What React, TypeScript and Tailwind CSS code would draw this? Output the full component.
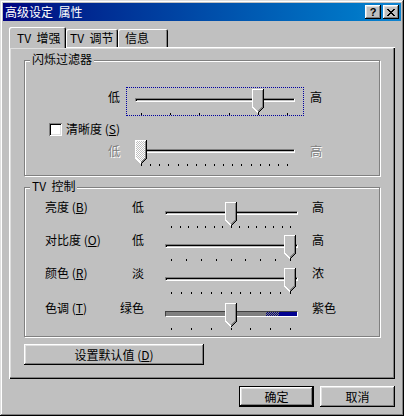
import React from "react";

const raised =
  "shadow-[inset_-1px_-1px_#000,inset_1px_1px_#fff,inset_-2px_-2px_#808080,inset_2px_2px_#dfdfdf]";

const embossed = "text-[#808080] [text-shadow:1px_1px_0_#fff]";

function Key({ k }: { k: string }) {
  return (
    <>
      {" ("}
      <span className="underline underline-offset-1">{k}</span>
      {")"}
    </>
  );
}

function Thumb({ disabled }: { disabled?: boolean }) {
  return (
    <svg className="block" width="12" height="24" viewBox="0 0 12 24" shapeRendering="crispEdges">
      {disabled && (
        <defs>
          <pattern id="dither" width="2" height="2" patternUnits="userSpaceOnUse">
            <rect width="2" height="2" fill="#c0c0c0" />
            <rect width="1" height="1" fill="#fff" />
            <rect x="1" y="1" width="1" height="1" fill="#fff" />
          </pattern>
        </defs>
      )}
      <polygon points="0,0 12,0 12,18 6,24 0,18" fill={disabled ? "url(#dither)" : "#c0c0c0"} />
      <path d="M0.5 18V0.5H11" stroke="#fff" fill="none" />
      <path d="M0.5 18L6 23.5" stroke="#fff" fill="none" />
      <path d="M11.5 0V18L6 23.5" stroke="#000" fill="none" />
      <path d="M10.5 1V18L6 22.5" stroke="#808080" fill="none" />
    </svg>
  );
}

type SliderProps = {
  len: number;
  count: number;
  value: number;
  focused?: boolean;
  disabled?: boolean;
  hue?: boolean;
};

function Slider({ len, count, value, focused, disabled, hue }: SliderProps) {
  const step = (len - 14) / (count - 1);
  const ticks = Array.from({ length: count }, (_, i) => Math.round(6 + i * step));
  const thumbLeft = 9 + Math.round(value * step);
  return (
    <div
      className={`relative flex h-[29px] shrink-0 flex-col px-[9px] ${hue ? "pt-[10px]" : "pt-[11px]"}`}
      style={{ width: len + 18 }}
    >
      {focused && <div className="absolute inset-0 border border-dotted border-[#0000a0]" />}
      {hue ? (
        <div className="flex h-[7px] border border-t-[#404040] border-l-[#404040] border-b-white border-r-white">
          <div className="flex-1 bg-[#808080]" />
          <div className="w-[13px] bg-[repeating-conic-gradient(#000080_0_25%,#808080_0_50%)] bg-[length:2px_2px]" />
          <div className="w-[18px] bg-[#000090]" />
        </div>
      ) : (
        <div className="h-[4px] border border-t-[#808080] border-l-[#808080] border-b-white border-r-white shadow-[inset_1px_1px_#000]" />
      )}
      <div className="relative mt-[11px] h-[2px]">
        {ticks.map((x) => (
          <span key={x} className="absolute top-0 h-[2px] w-px bg-black" style={{ left: x }} />
        ))}
      </div>
      <div className="absolute top-[2px]" style={{ left: thumbLeft }}>
        <Thumb disabled={disabled} />
      </div>
    </div>
  );
}

function Group({ title, className, children }: { title: React.ReactNode; className: string; children: React.ReactNode }) {
  return (
    <div className={`relative flex w-[356px] flex-col border border-[#808080] shadow-[inset_1px_1px_#fff,1px_1px_#fff] ${className}`}>
      <span className="absolute -top-[9px] left-[5px] bg-[#c0c0c0] px-[2px]">{title}</span>
      {children}
    </div>
  );
}

const controls = [
  { label: "亮度", key: "B", lo: "低", hi: "高", count: 15, value: 7 },
  { label: "对比度", key: "O", lo: "低", hi: "高", count: 9, value: 8 },
  { label: "颜色", key: "R", lo: "淡", hi: "浓", count: 13, value: 12 },
  { label: "色调", key: "T", lo: "绿色", hi: "紫色", count: 7, value: 3 },
];

export default function App() {
  return (
    <div className="flex h-[416px] w-[404px] flex-col bg-[#c0c0c0] p-[3px] font-['Noto_Sans_CJK_SC',sans-serif] text-[12px] leading-[14px] text-black shadow-[inset_-1px_-1px_#000,inset_1px_1px_#dfdfdf,inset_-2px_-2px_#808080,inset_2px_2px_#fff]">
      {/* title bar */}
      <div className="flex h-[18px] items-center bg-linear-to-r from-[#000080] to-[#1084d0] pl-[2px] pr-[2px] text-white">
        <span className="flex-1">高级设定&nbsp; 属性</span>
        <div className={`flex h-[14px] w-[16px] items-center justify-center bg-[#c0c0c0] font-['Liberation_Sans',sans-serif] text-[11px] font-bold text-black ${raised}`}>
          ?
        </div>
        <div className={`ml-[2px] flex h-[14px] w-[16px] items-center justify-center bg-[#c0c0c0] ${raised}`}>
          <svg className="block" width="8" height="7" viewBox="0 0 8 7" shapeRendering="crispEdges">
            <path
              d="M0 0h2v1H0zM6 0h2v1H6zM1 1h2v1H1zM5 1h2v1H5zM2 2h4v1H2zM3 3h2v1H3zM2 4h4v1H2zM1 5h2v1H1zM5 5h2v1H5zM0 6h2v1H0zM6 6h2v1H6z"
              fill="#000"
            />
          </svg>
        </div>
      </div>

      <div className="mt-[6px] flex flex-col px-[6px]">
        {/* tabs */}
        <div className="flex h-[20px] items-end">
          <div className="relative z-10 -mb-px h-[21px] w-[57px] rounded-t-[2px] bg-[#c0c0c0] pl-[8px] pt-[4px] shadow-[inset_1px_1px_#fff,inset_-1px_0_#000,inset_-2px_0_#808080]">
            TV&nbsp; 增强
          </div>
          <div className="h-[18px] w-[52px] rounded-t-[2px] pl-[4px] pt-[2px] shadow-[inset_1px_1px_#fff,inset_-1px_0_#000,inset_-2px_0_#808080]">
            TV&nbsp; 调节
          </div>
          <div className="h-[18px] w-[50px] rounded-t-[2px] pl-[7px] pt-[2px] shadow-[inset_1px_1px_#fff,inset_-1px_0_#000,inset_-2px_0_#808080]">
            信息
          </div>
        </div>

        {/* panel */}
        <div className="flex h-[332px] flex-col pl-[15px] pt-[13px] shadow-[inset_1px_1px_#fff,inset_-1px_-1px_#000,inset_-2px_-2px_#808080,inset_2px_2px_#dfdfdf]">
          <Group title="闪烁过滤器" className="h-[116px]">
            <div className="mt-[26px] flex items-start pl-[83px]">
              <span className="mt-[3px] w-[12px]">低</span>
              <div className="ml-[6px]">
                <Slider len={160} count={6} value={4} focused />
              </div>
              <span className="ml-[6px] mt-[3px]">高</span>
            </div>
            <div className="mt-[6px] flex items-center pl-[24px]">
              <div className="h-[13px] w-[13px] bg-white shadow-[inset_1px_1px_#808080,inset_-1px_-1px_#fff,inset_2px_2px_#000,inset_-2px_-2px_#dfdfdf]" />
              <span className="ml-[4px]">
                清晰度
                <Key k="S" />
              </span>
            </div>
            <div className="mt-[2px] flex items-start pl-[83px]">
              <span className={`mt-[6px] w-[12px] ${embossed}`}>低</span>
              <div className="ml-[6px]">
                <Slider len={160} count={17} value={0} disabled />
              </div>
              <span className={`ml-[6px] mt-[6px] ${embossed}`}>高</span>
            </div>
          </Group>

          <Group title="TV&nbsp; 控制" className="mt-[11px] h-[150px] pt-[12px]">
            {controls.map((c, i) => (
              <div key={c.key} className={`flex h-[29px] items-start pl-[20px] ${i === 0 ? "" : i === 3 ? "mt-[6px]" : "mt-[4px]"}`}>
                <span className="w-[74px] whitespace-nowrap">
                  {c.label}
                  <Key k={c.key} />
                </span>
                <span className="w-[25px] whitespace-nowrap text-right">{c.lo}</span>
                <div className="ml-[12px]">
                  <Slider len={133} count={c.count} value={c.value} hue={c.key === "T"} />
                </div>
                <span className="ml-[5px] whitespace-nowrap">{c.hi}</span>
              </div>
            ))}
          </Group>

          <div className={`mt-[7px] flex h-[21px] w-[180px] items-center justify-center ${raised}`}>
            设置默认值
            <Key k="D" />
          </div>
        </div>

        {/* dialog buttons */}
        <div className="mt-[7px] flex justify-end gap-[6px]">
          <div className="h-[21px] w-[75px] border border-black">
            <div className={`flex h-full items-center justify-center ${raised}`}>确定</div>
          </div>
          <div className={`flex h-[21px] w-[75px] items-center justify-center ${raised}`}>取消</div>
        </div>
      </div>
    </div>
  );
}
